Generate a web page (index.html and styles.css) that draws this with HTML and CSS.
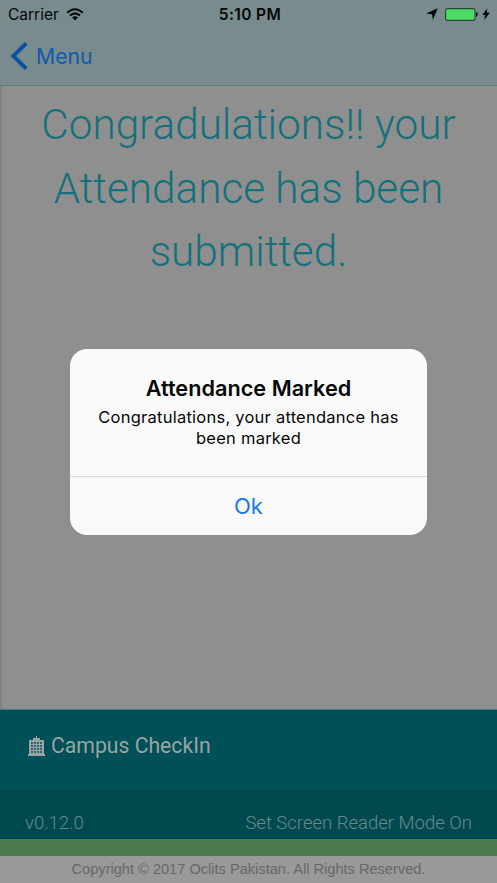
FILE: index.html
```html
<!DOCTYPE html>
<html lang="en">
<head>
<meta charset="utf-8">
<title>Campus CheckIn</title>
<link rel="stylesheet" href="styles.css">
</head>
<body>
<div class="screen">
  <header class="top">
    <div class="status">
      <div class="carrier"><span>Carrier</span>
        <svg class="wifi" viewBox="0 0 18 13"><g fill="none" stroke="#050808" stroke-width="2"><path d="M1.2 4.7Q9-2.3 16.8 4.7"/><path d="M4 7.6Q9 3.1 14 7.6"/></g><path fill="#050808" d="M6.1 9.5Q9 7.1 11.9 9.5L9 12.5Z"/></svg>
      </div>
      <div class="time">5:10 PM</div>
      <div class="power">
        <svg class="locate" viewBox="0 0 12 12"><path fill="#050808" d="M11.8.2L6.8 11.8 6.1 6.2 0 5.4Z"/></svg>
        <svg class="battery" viewBox="0 0 33 13"><rect x=".6" y=".6" width="29.4" height="11.8" rx="2" fill="#4cdc64" stroke="#2b4438" stroke-width="1.1"/><path fill="#050808" d="M31 4q1.8.6 1.8 2.5T31 9Z"/></svg>
        <svg class="bolt" viewBox="0 0 8 12"><path fill="#050808" d="M5.3.2L.2 6.9 3.1 7.1 2.2 11.9 7.8 4.8 4.7 4.6Z"/></svg>
      </div>
    </div>
    <div class="back">
      <svg class="chevron" viewBox="0 0 17 28"><path d="M15.2 1.4L2.500 14 15.2 26.6" fill="none" stroke="#0650a5" stroke-width="3.8"/></svg>
      <span>Menu</span>
    </div>
  </header>
  <main class="content">
    <h1><span>Congradulations!! your</span><br><span>Attendance has been</span><br><span>submitted.</span></h1>
  </main>
  <footer>
    <div class="brand">
      <svg class="building" viewBox="0 0 17 20"><path fill="#9ba3a4" d="M8 0h1v2h3v2h4v14h1v2H0v-2h1V4h4V2h3Z"/><g fill="#2c6a70"><path d="M3 6h2v2H3zM6 6h2v2H6zM9 6h2v2H9zM12 6h2v2h-2zM3 9h2v2H3zM6 9h2v2H6zM9 9h2v2H9zM12 9h2v2h-2zM3 12h2v2H3zM6 12h2v2H6zM9 12h2v2H9zM12 12h2v2h-2zM3 15h2v2H3zM6 15h2v2H6zM9 15h2v2H9zM12 15h2v2h-2z"/></g></svg>
      <span>Campus CheckIn</span>
    </div>
    <div class="options"><span>v0.12.0</span><span>Set Screen Reader Mode On</span></div>
    <div class="strip"></div>
    <div class="copyright"><span>Copyright © 2017 Oclits Pakistan. All Rights Reserved.</span></div>
  </footer>
  <div class="overlay">
    <section class="alert" role="alertdialog">
      <div class="message">
        <h2>Attendance Marked</h2>
        <p><span>Congratulations, your attendance has</span><br><span>been marked</span></p>
      </div>
      <button>Ok</button>
    </section>
  </div>
</div>
</body>
</html>
```
FILE: styles.css
```css
* { box-sizing: border-box; }
body { margin: 0; font-family: Inter, "Liberation Sans", sans-serif; }
svg { display: block; flex: none; }
span { white-space: nowrap; }
.screen { position: relative; display: flex; flex-direction: column; width: 497px; height: 883px; overflow: hidden; background: #8f8f8f; }
.top { height: 86px; background: #788b8d; border-bottom: 1px solid #6b7879; color: #050808; }
.status { display: grid; grid-template-columns: 1fr auto 1fr; height: 28px; padding: 0 7px 0 8px; align-items: center; font-size: 15.5px; }
.carrier { display: flex; align-items: center; gap: 7px; }
.wifi { width: 18px; height: 13px; }
.time { font-weight: 600; letter-spacing: .4px; padding-left: 2px; }
.power { display: flex; justify-content: flex-end; align-items: center; }
.locate { width: 12px; height: 12px; margin-right: 7px; }
.battery { width: 33px; height: 13px; margin-right: 4px; }
.bolt { width: 8px; height: 12px; }
.back { display: flex; align-items: center; height: 56px; padding-left: 11px; gap: 8px; font-size: 21.2px; color: #1359ab; }
.chevron { width: 17px; height: 28px; }
.content { flex: 1; padding-top: 7px; box-shadow: inset 3px 0 3px -2px #777; }
h1 { margin: 0; text-align: center; font: 300 42.25px/63.5px Roboto, sans-serif; color: #14717b; }
footer { font-family: Roboto, sans-serif; }
.brand { display: flex; align-items: center; gap: 6px; height: 81px; padding: 0 28px 9px; background: #005058; border-top: 1px solid #478086; color: #9ba3a4; font-size: 21.2px; }
.building { width: 17px; height: 20px; }
.options { display: flex; justify-content: space-between; height: 49px; padding: 19px 25px 0; background: #00494f; color: #678a8d; font-size: 18.5px; font-weight: 300; line-height: 28px; }
.strip { height: 17px; background: #4d7b50; }
.copyright { height: 27px; background: #999; color: #686868; text-align: center; font: 14.6px/26px "Liberation Sans", sans-serif; }
.overlay { position: absolute; inset: 0; display: flex; justify-content: center; align-items: flex-start; padding-top: 349px; }
.alert { width: 357px; height: 186px; border-radius: 17px; background: #f9f9f9; overflow: hidden; }
.message { height: 127px; padding-top: 26px; text-align: center; color: #080808; }
h2 { margin: 0; font-size: 21.7px; line-height: 26px; font-weight: 600; }
p { margin: 6px 0 0; font-size: 16.5px; letter-spacing: .24px; line-height: 21px; }
button { display: block; width: 100%; height: 59px; padding: 0; border: 0; border-top: 1px solid #dadada; background: none; color: #1678f2; font: 22px/58px Inter, sans-serif; }
```
